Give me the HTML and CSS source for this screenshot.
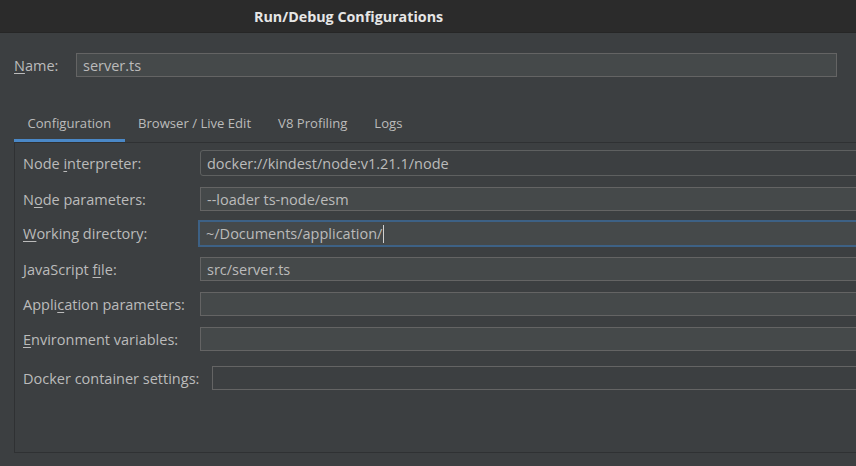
FILE: index.html
```html
<!DOCTYPE html>
<html>
<head>
<meta charset="utf-8">
<link rel="stylesheet" href="styles.css">
</head>
<body>
<div class="titlebar"><span class="title">Run/Debug Configurations</span></div>
<div class="content">
  <div class="name-row">
    <label class="name-label"><u>N</u>ame:</label>
    <div class="field filled name-field">server.ts</div>
  </div>
  <div class="tabs">
    <div class="tab active">Configuration</div>
    <div class="tab">Browser / Live Edit</div>
    <div class="tab">V8 Profiling</div>
    <div class="tab">Logs</div>
  </div>
  <div class="panel">
    <div class="row r-interp">
      <label class="lbl">Node <u>i</u>nterpreter:</label>
      <div class="field combo">docker://kindest/node:v1.21.1/node</div>
    </div>
    <div class="row">
      <label class="lbl">N<u>o</u>de parameters:</label>
      <div class="field filled">--loader ts-node/esm</div>
    </div>
    <div class="row r-work">
      <label class="lbl"><u>W</u>orking directory:</label>
      <div class="field filled focused">~/Documents/application/<span class="caret"></span></div>
    </div>
    <div class="row">
      <label class="lbl">JavaScript <u>f</u>ile:</label>
      <div class="field filled">src/server.ts</div>
    </div>
    <div class="row">
      <label class="lbl">Appli<u>c</u>ation parameters:</label>
      <div class="field filled"></div>
    </div>
    <div class="row">
      <label class="lbl"><u>E</u>nvironment variables:</label>
      <div class="field filled"></div>
    </div>
    <div class="row r-docker">
      <label class="lbl">Docker container settings:</label>
      <div class="field docker-field"></div>
    </div>
  </div>
</div>
</body>
</html>
```
FILE: styles.css
```css
html, body {
  margin: 0;
  padding: 0;
  width: 856px;
  height: 466px;
  overflow: hidden;
  background: #3c3f41;
  font-family: "Open Sans", "DejaVu Sans", sans-serif;
  font-size: 14.5px;
  color: #bbbbbb;
}
u { text-decoration: underline; text-underline-offset: 2px; }

.titlebar {
  height: 33px;
  background: #2b2b2b;
  border-bottom: 1px solid #262626;
  display: flex;
  align-items: center;
  box-sizing: border-box;
  padding-left: 254px;
}
.title {
  color: #e6e6e6;
  font-weight: bold;
  font-size: 14.3px;
}

.content {
  padding-left: 14px;
}

.name-row {
  display: flex;
  align-items: center;
  margin-top: 20px;
  height: 24px;
}
.name-label {
  width: 62px;
}
.field {
  box-sizing: border-box;
  height: 24px;
  border: 1px solid #646464;
  display: flex;
  align-items: center;
  padding-left: 6px;
  color: #bbbbbb;
  white-space: nowrap;
}
.filled { background: #45494a; }
.name-field {
  width: 761px;
  padding-left: 6px;
}

.tabs {
  display: flex;
  margin-top: 31px;
  height: 34px;
  font-size: 13.1px;
}
.tab {
  box-sizing: border-box;
  height: 34px;
  padding: 0 13.5px;
  display: flex;
  align-items: center;
  padding-bottom: 1px;
  border-bottom: 3px solid transparent;
}
.tab.active {
  border-bottom-color: #4a88c7;
}

.panel {
  width: 900px;
  height: 311px;
  border-top: 1px solid #2f3133;
  border-left: 1px solid #2f3133;
  border-bottom: 1px solid #2f3133;
  box-sizing: border-box;
  padding-left: 8px;
  padding-top: 7px;
  display: flex;
  flex-direction: column;
  gap: 11px;
}
.row {
  display: flex;
  align-items: center;
}
.lbl {
  width: 177px;
  flex: none;
  white-space: nowrap;
}
.row .field {
  flex: 1;
}
.combo {
  height: 26px;
  border-radius: 3px;
  border-color: #5e6060;
}
.focused {
  border: 2px solid #3d6185;
  height: 27px;
  padding-left: 6px;
}
.r-work { margin-top: -2px; margin-bottom: -1px; }
.r-work .field { margin-left: -2px; }
.caret {
  display: inline-block;
  width: 1px;
  height: 18px;
  background: #d0d0d0;
  margin-left: 1px;
}
.r-docker { margin-top: 4px; }
.r-docker .lbl { width: 189px; }
.docker-field { background: transparent; }
```
